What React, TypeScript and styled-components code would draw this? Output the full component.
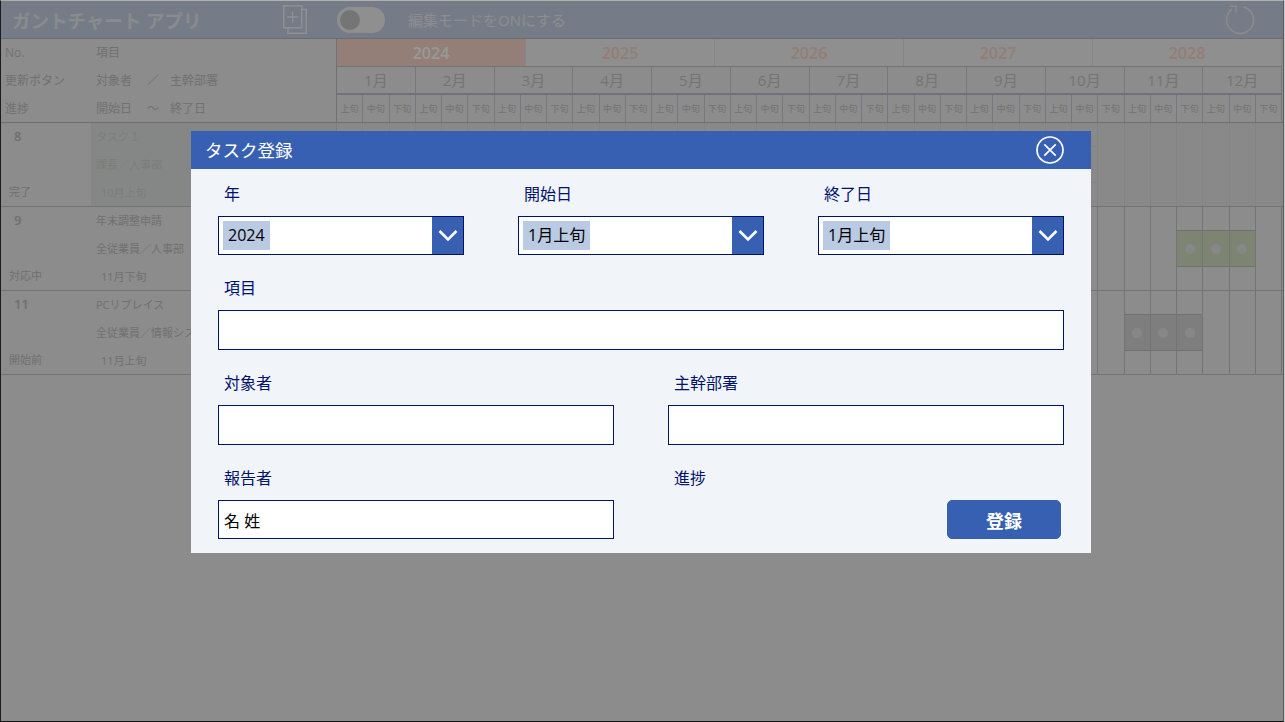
import React from "react";
import styled, { createGlobalStyle } from "styled-components";

const FONT = `"Open Sans", "Noto Sans CJK JP", sans-serif`;
const NAVY = "#00126B";
const BLUE = "#3860B2";

const Global = createGlobalStyle`
  html, body { margin: 0; padding: 0; background: #c8c8c8; }
  body { font-family: ${FONT}; overflow: hidden; }
  * { box-sizing: border-box; }
`;

const Frame = styled.div`
  position: relative;
  width: 1284px;
  height: 722px;
  overflow: hidden;
  background: #e9e9e9;
  border-top: 1px solid #b0b0b0;
  border-left: 1px solid #1c1c1c;
  border-right: 1px solid #5c5c5c;
  border-bottom: 1px solid #111;
`;

const AppBar = styled.header`
  display: flex;
  align-items: center;
  height: 38px;
  background: #c5cfe1;
  border-bottom: 1px solid #b4b2ba;
`;

const AppTitle = styled.h1`
  width: 282px;
  margin: 0;
  padding-left: 11px;
  font-size: 18.500px;
  font-weight: 700;
  color: #e6e8ec;
  white-space: nowrap;
`;

const Toggle = styled.div`
  display: flex;
  align-items: center;
  width: 48px;
  height: 26px;
  margin-left: 30px;
  padding-left: 3px;
  border-radius: 13px;
  background: #eeeeee;
`;

const Knob = styled.div`
  width: 20px;
  height: 20px;
  border-radius: 50%;
  background: #c4c4c4;
`;

const ToggleLabel = styled.span`
  margin-left: 23px;
  font-size: 15px;
  color: #e8ebf0;
`;

const RefreshWrap = styled.div`
  display: flex;
  margin-left: auto;
  margin-right: 27px;
`;

const HeadRow = styled.div`
  display: grid;
  grid-template-columns: 336px 945px;
  height: 84px;
  border-bottom: 1px solid #b8b6bc;
`;

const HeadLeft = styled.div`
  display: grid;
  grid-template-rows: 28px 28px 27px;
  border-right: 1px solid #bdbcc4;
`;

const HeadLeftLine = styled.div`
  display: grid;
  grid-template-columns: 91px 51px 23px 1fr;
  align-items: center;
  padding-left: 4px;
  font-size: 12px;
  color: #bdbdbd;
  white-space: nowrap;
  & > span {
    padding-bottom: 2px;
  }
`;

const Timeline = styled.div`
  display: grid;
  grid-template-rows: 28px 28px 27px;
`;

const YearRow = styled.div`
  display: grid;
  grid-template-columns: repeat(5, 1fr);
  border-bottom: 1px solid #bfbec6;
`;

const YearCell = styled.div<{ $active?: boolean }>`
  display: flex;
  align-items: center;
  justify-content: center;
  font-size: 16px;
  font-weight: 600;
  background: ${(p) => (p.$active ? "#f5d3c8" : "#eeeeee")};
  color: ${(p) => (p.$active ? "#ffffff" : "#f5d2c2")};
  border-right: 1px solid #e0e0e0;
`;

const MonthRow = styled.div`
  display: grid;
  grid-template-columns: repeat(12, 1fr);
  border-bottom: 2px solid #bcbdca;
`;

const MonthCell = styled.div`
  display: flex;
  align-items: center;
  justify-content: center;
  padding-bottom: 1px;
  font-size: 15px;
  color: #c2c2c2;
  border-right: 1px solid #c3c6d8;
`;

const SubRow = styled.div`
  display: grid;
  grid-template-columns: repeat(36, 1fr);
`;

const SubCell = styled.div`
  display: flex;
  align-items: center;
  justify-content: center;
  font-size: 9px;
  color: #c0c0c0;
  border-right: 1px solid #c3c6d8;
  white-space: nowrap;
`;

const TaskRow = styled.div`
  display: grid;
  grid-template-columns: 336px 945px;
  height: 84px;
  border-bottom: 1px solid #c0c0c0;
`;

const TaskLeft = styled.div`
  display: grid;
  grid-template-columns: 90px 1fr;
  border-right: 1px solid #d0d0d0;
`;

const TaskMeta = styled.div`
  display: flex;
  flex-direction: column;
  justify-content: space-between;
  padding-left: 8px;
`;

const TaskNo = styled.div`
  height: 28px;
  padding-left: 5px;
  line-height: 27px;
  font-size: 13px;
  font-weight: 600;
  color: #bababa;
`;

const TaskStatus = styled.div`
  height: 27px;
  line-height: 25px;
  font-size: 11px;
  color: #bcbcbc;
`;

const TaskInfo = styled.div<{ $done?: boolean }>`
  display: grid;
  grid-template-rows: 28px 28px 27px;
  align-items: center;
  padding-left: 5px;
  font-size: 11px;
  white-space: nowrap;
  overflow: hidden;
  color: ${(p) => (p.$done ? "#cdd2cf" : "#bcbcbc")};
  background: ${(p) => (p.$done ? "#dce2de" : "transparent")};
  & > span {
    padding-bottom: 2px;
  }
`;

const DateLine = styled.span`
  padding-left: 5px;
`;

const TaskCells = styled.div`
  display: grid;
  grid-template-columns: repeat(36, 1fr);
`;

const TaskCell = styled.div<{ $done?: boolean }>`
  display: flex;
  align-items: center;
  background: ${(p) => (p.$done ? "#e4e4e4" : "transparent")};
  border-right: 1px solid ${(p) => (p.$done ? "#dcdcdc" : "#c2c2c2")};
`;

const Bar = styled.div<{ $tone: "green" | "gray" | "faint" }>`
  display: flex;
  align-items: center;
  justify-content: center;
  flex: 1;
  height: 37px;
  background: ${(p) =>
    p.$tone === "green" ? "#d2dcbf" : p.$tone === "gray" ? "#d3d3d3" : "#e4e4e4"};
  border-top: 1px solid ${(p) => (p.$tone === "faint" ? "#dcdcdc" : "#bcbcbc")};
  border-bottom: 1px solid ${(p) => (p.$tone === "faint" ? "#dcdcdc" : "#bcbcbc")};
`;

const BarDot = styled.div`
  width: 10px;
  height: 10px;
  border-radius: 50%;
  background: #e2e2e2;
`;

const Overlay = styled.div`
  position: absolute;
  inset: 0;
  background: rgba(0, 0, 0, 0.4);
`;

const Modal = styled.section`
  position: absolute;
  left: 190px;
  top: 130px;
  width: 900px;
  height: 422px;
  background: #f1f4f9;
`;

const ModalHeader = styled.div`
  display: flex;
  align-items: center;
  justify-content: space-between;
  height: 38px;
  padding: 0 27px 0 14px;
  background: ${BLUE};
`;

const ModalTitle = styled.h2`
  margin: 0;
  padding-bottom: 2px;
  font-size: 17.500px;
  font-weight: 400;
  color: #ffffff;
`;

const CloseIcon = styled.svg`
  display: block;
`;

const ModalBody = styled.div`
  display: flex;
  flex-direction: column;
  gap: 22px;
  padding: 14px 27px 0;
`;

const FieldRow = styled.div<{ $cols: number }>`
  display: grid;
  grid-template-columns: repeat(${(p) => p.$cols}, 1fr);
  column-gap: 54px;
`;

const Field = styled.div`
  display: flex;
  flex-direction: column;
  gap: 11px;
`;

const FieldLabel = styled.label`
  height: 22px;
  padding-left: 6px;
  line-height: 22px;
  font-size: 16px;
  color: ${NAVY};
`;

const Select = styled.div`
  display: flex;
  align-items: center;
  height: 39px;
  padding-left: 4px;
  background: #ffffff;
  border: 1px solid ${NAVY};
`;

const SelectValue = styled.span`
  height: 29px;
  padding: 0 5px;
  line-height: 29px;
  font-size: 16px;
  color: #000000;
  background: #bacae2;
`;

const SelectButton = styled.div`
  display: flex;
  align-items: center;
  justify-content: center;
  align-self: stretch;
  width: 31px;
  margin-left: auto;
  background: ${BLUE};
`;

const TextInput = styled.input<{ $h?: number }>`
  display: block;
  width: 100%;
  height: ${(p) => p.$h ?? 40}px;
  padding: 0 5px;
  font-family: ${FONT};
  font-size: 16px;
  color: #000000;
  background: #ffffff;
  border: 1px solid ${NAVY};
  border-radius: 0;
  outline: none;
`;

const ActionRow = styled.div`
  display: flex;
  justify-content: flex-end;
  padding-right: 3px;
`;

const SubmitButton = styled.button`
  width: 114px;
  height: 39px;
  font-family: ${FONT};
  font-size: 18px;
  font-weight: 700;
  color: #ffffff;
  background: ${BLUE};
  border: 1px solid #3a5ea8;
  border-radius: 5px;
`;

const Chevron = () => (
  <svg width="20" height="13" viewBox="0 0 20 13" fill="none">
    <path d="M1.500 2l8.500 8.500L18.500 2" stroke="#fff" strokeWidth="2.6" />
  </svg>
);

const NewDocIcon = () => (
  <svg width="24" height="29" viewBox="0 0 24 29" fill="none" stroke="#eef0f4" strokeWidth="1.4">
    <rect x="0.7" y="0.7" width="18" height="22" />
    <path d="M19 4.500h4.300v23.800H5V23" />
    <path d="M9.700 6.500v11M4.200 12h11" />
  </svg>
);

const RefreshIcon = () => (
  <svg width="32" height="32" viewBox="0 0 32 32" fill="none" stroke="#e8e8e8" strokeWidth="1.5">
    <path d="M19.500 2.900A13.500 13.500 0 1 1 8 5.200" />
    <path d="M5.500 2h6.500v6.500" />
  </svg>
);

const CloseCircle = () => (
  <CloseIcon width="28" height="28" viewBox="0 0 28 28" fill="none" stroke="#fff" strokeWidth="1.7">
    <circle cx="14" cy="14" r="13" />
    <path d="M8.300 8.300l11.400 11.400M19.700 8.300L8.300 19.700" />
  </CloseIcon>
);

const YEARS = [2024, 2025, 2026, 2027, 2028];
const MONTHS = Array.from({ length: 12 }, (_, i) => `${i + 1}月`);
const PARTS = ["上旬", "中旬", "下旬"];

type Task = {
  no: number;
  title: string;
  who: string;
  date: string;
  status: string;
  done?: boolean;
  bar: number[];
  tone: "green" | "gray" | "faint";
};

const TASKS: Task[] = [
  { no: 8, title: "タスク１", who: "課長／人事部", date: "10月上旬", status: "完了", done: true, bar: [27, 28], tone: "faint" },
  { no: 9, title: "年末調整申請", who: "全従業員／人事部", date: "11月下旬", status: "対応中", bar: [32, 33, 34], tone: "green" },
  { no: 11, title: "PCリプレイス", who: "全従業員／情報システム部", date: "11月上旬", status: "開始前", bar: [30, 31, 32], tone: "gray" },
];

const DateSelect = ({ label, value }: { label: string; value: string }) => (
  <Field>
    <FieldLabel>{label}</FieldLabel>
    <Select>
      <SelectValue>{value}</SelectValue>
      <SelectButton>
        <Chevron />
      </SelectButton>
    </Select>
  </Field>
);

const TextField = ({ label, value, h }: { label: string; value?: string; h?: number }) => (
  <Field>
    <FieldLabel>{label}</FieldLabel>
    <TextInput $h={h} readOnly value={value ?? ""} />
  </Field>
);

export default function App() {
  return (
    <Frame>
      <Global />
      <AppBar>
        <AppTitle>ガントチャート アプリ</AppTitle>
        <NewDocIcon />
        <Toggle>
          <Knob />
        </Toggle>
        <ToggleLabel>編集モードをONにする</ToggleLabel>
        <RefreshWrap>
          <RefreshIcon />
        </RefreshWrap>
      </AppBar>

      <HeadRow>
        <HeadLeft>
          <HeadLeftLine>
            <span>No.</span>
            <span>項目</span>
          </HeadLeftLine>
          <HeadLeftLine>
            <span>更新ボタン</span>
            <span>対象者</span>
            <span>／</span>
            <span>主幹部署</span>
          </HeadLeftLine>
          <HeadLeftLine>
            <span>進捗</span>
            <span>開始日</span>
            <span>～</span>
            <span>終了日</span>
          </HeadLeftLine>
        </HeadLeft>
        <Timeline>
          <YearRow>
            {YEARS.map((y, i) => (
              <YearCell key={y} $active={i === 0}>
                {y}
              </YearCell>
            ))}
          </YearRow>
          <MonthRow>
            {MONTHS.map((m) => (
              <MonthCell key={m}>{m}</MonthCell>
            ))}
          </MonthRow>
          <SubRow>
            {MONTHS.flatMap((m) =>
              PARTS.map((p) => <SubCell key={m + p}>{p}</SubCell>)
            )}
          </SubRow>
        </Timeline>
      </HeadRow>

      {TASKS.map((t) => (
        <TaskRow key={t.no}>
          <TaskLeft>
            <TaskMeta>
              <TaskNo>{t.no}</TaskNo>
              <TaskStatus>{t.status}</TaskStatus>
            </TaskMeta>
            <TaskInfo $done={t.done}>
              <span>{t.title}</span>
              <span>{t.who}</span>
              <DateLine>{t.date}</DateLine>
            </TaskInfo>
          </TaskLeft>
          <TaskCells>
            {Array.from({ length: 36 }, (_, i) => (
              <TaskCell key={i} $done={t.done}>
                {t.bar.includes(i) && (
                  <Bar $tone={t.tone}>{!t.done && <BarDot />}</Bar>
                )}
              </TaskCell>
            ))}
          </TaskCells>
        </TaskRow>
      ))}

      <Overlay />

      <Modal>
        <ModalHeader>
          <ModalTitle>タスク登録</ModalTitle>
          <CloseCircle />
        </ModalHeader>
        <ModalBody>
          <FieldRow $cols={3}>
            <DateSelect label="年" value="2024" />
            <DateSelect label="開始日" value="1月上旬" />
            <DateSelect label="終了日" value="1月上旬" />
          </FieldRow>
          <FieldRow $cols={1}>
            <TextField label="項目" />
          </FieldRow>
          <FieldRow $cols={2}>
            <TextField label="対象者" />
            <TextField label="主幹部署" />
          </FieldRow>
          <FieldRow $cols={2}>
            <TextField label="報告者" value="名 姓" h={39} />
            <Field>
              <FieldLabel>進捗</FieldLabel>
              <ActionRow>
                <SubmitButton>登録</SubmitButton>
              </ActionRow>
            </Field>
          </FieldRow>
        </ModalBody>
      </Modal>
    </Frame>
  );
}
